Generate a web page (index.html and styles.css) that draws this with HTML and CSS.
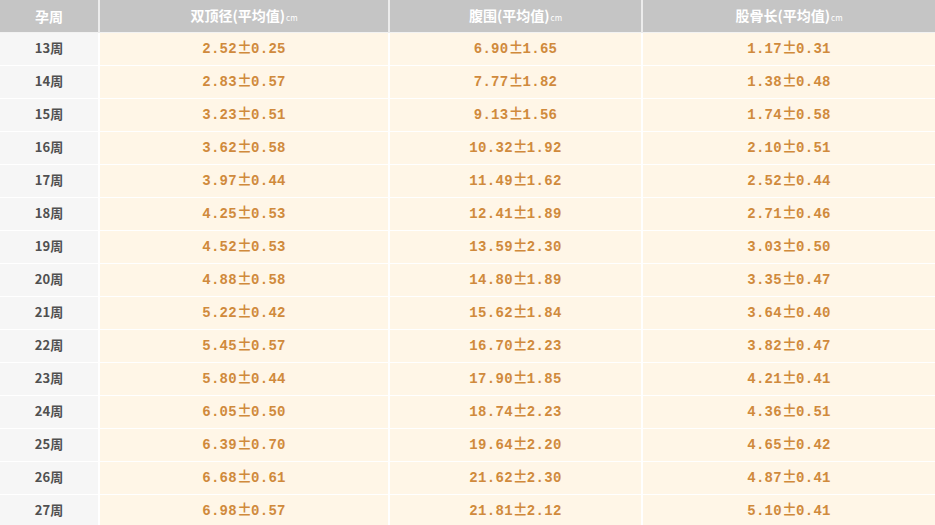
FILE: index.html
```html
<!DOCTYPE html>
<html lang="zh">
<head>
<meta charset="utf-8">
<link rel="stylesheet" href="styles.css">
</head>
<body>
<table class="grid">
  <colgroup>
    <col class="c-week"><col class="c-a"><col class="c-b"><col class="c-c">
  </colgroup>
  <thead>
    <tr>
      <th>孕周</th>
      <th>双顶径(平均值)<span class="unit">cm</span></th>
      <th>腹围(平均值)<span class="unit">cm</span></th>
      <th>股骨长(平均值)<span class="unit">cm</span></th>
    </tr>
  </thead>
  <tbody>
    <tr><td class="wk">13周</td><td>2.52<span class="pm">±</span>0.25</td><td>6.90<span class="pm">±</span>1.65</td><td>1.17<span class="pm">±</span>0.31</td></tr>
    <tr><td class="wk">14周</td><td>2.83<span class="pm">±</span>0.57</td><td>7.77<span class="pm">±</span>1.82</td><td>1.38<span class="pm">±</span>0.48</td></tr>
    <tr><td class="wk">15周</td><td>3.23<span class="pm">±</span>0.51</td><td>9.13<span class="pm">±</span>1.56</td><td>1.74<span class="pm">±</span>0.58</td></tr>
    <tr><td class="wk">16周</td><td>3.62<span class="pm">±</span>0.58</td><td>10.32<span class="pm">±</span>1.92</td><td>2.10<span class="pm">±</span>0.51</td></tr>
    <tr><td class="wk">17周</td><td>3.97<span class="pm">±</span>0.44</td><td>11.49<span class="pm">±</span>1.62</td><td>2.52<span class="pm">±</span>0.44</td></tr>
    <tr><td class="wk">18周</td><td>4.25<span class="pm">±</span>0.53</td><td>12.41<span class="pm">±</span>1.89</td><td>2.71<span class="pm">±</span>0.46</td></tr>
    <tr><td class="wk">19周</td><td>4.52<span class="pm">±</span>0.53</td><td>13.59<span class="pm">±</span>2.30</td><td>3.03<span class="pm">±</span>0.50</td></tr>
    <tr><td class="wk">20周</td><td>4.88<span class="pm">±</span>0.58</td><td>14.80<span class="pm">±</span>1.89</td><td>3.35<span class="pm">±</span>0.47</td></tr>
    <tr><td class="wk">21周</td><td>5.22<span class="pm">±</span>0.42</td><td>15.62<span class="pm">±</span>1.84</td><td>3.64<span class="pm">±</span>0.40</td></tr>
    <tr><td class="wk">22周</td><td>5.45<span class="pm">±</span>0.57</td><td>16.70<span class="pm">±</span>2.23</td><td>3.82<span class="pm">±</span>0.47</td></tr>
    <tr><td class="wk">23周</td><td>5.80<span class="pm">±</span>0.44</td><td>17.90<span class="pm">±</span>1.85</td><td>4.21<span class="pm">±</span>0.41</td></tr>
    <tr><td class="wk">24周</td><td>6.05<span class="pm">±</span>0.50</td><td>18.74<span class="pm">±</span>2.23</td><td>4.36<span class="pm">±</span>0.51</td></tr>
    <tr><td class="wk">25周</td><td>6.39<span class="pm">±</span>0.70</td><td>19.64<span class="pm">±</span>2.20</td><td>4.65<span class="pm">±</span>0.42</td></tr>
    <tr><td class="wk">26周</td><td>6.68<span class="pm">±</span>0.61</td><td>21.62<span class="pm">±</span>2.30</td><td>4.87<span class="pm">±</span>0.41</td></tr>
    <tr><td class="wk">27周</td><td>6.98<span class="pm">±</span>0.57</td><td>21.81<span class="pm">±</span>2.12</td><td>5.10<span class="pm">±</span>0.41</td></tr>
  </tbody>
</table>
</body>
</html>
```
FILE: styles.css
```css
html, body {
  margin: 0;
  padding: 0;
  background: #ffffff;
}

.grid {
  width: 935px;
  border-collapse: collapse;
  table-layout: fixed;
}

.c-week { width: 99px; }
.c-a { width: 290px; }
.c-b { width: 253px; }
.c-c { width: 293px; }

.grid th {
  height: 32px;
  padding: 0;
  background: #c5c5c5;
  color: #ffffff;
  font-family: "Noto Sans CJK SC", sans-serif;
  font-weight: 700;
  font-size: 14px;
  line-height: 16px;
  text-align: center;
  vertical-align: middle;
  border-right: 2px solid #ececec;
  border-bottom: 1px solid #f2f2f2;
}

.grid th:last-child { border-right: 0; }

.unit {
  font-size: 8px;
  font-weight: 400;
  margin-left: 1px;
}

.grid td {
  height: 30px;
  padding: 0 0 2px;
  background: #fff6e7;
  color: #d08a3c;
  font-family: "Liberation Mono", "Noto Sans CJK SC", monospace;
  font-weight: 700;
  font-size: 14px;
  line-height: 16px;
  letter-spacing: 0.3px;
  text-align: center;
  vertical-align: middle;
  border-right: 2px solid #ffffff;
  border-bottom: 1px solid #ffffff;
}

.grid td:last-child { border-right: 0; }

.pm {
  display: inline-block;
  width: 14px;
  line-height: 16px;
  text-align: center;
  font-family: "Noto Sans CJK SC", sans-serif;
  font-size: 15px;
  letter-spacing: 0;
}

.grid td.wk {
  background: #f6f6f6;
  color: #505050;
  font-family: "Noto Sans CJK SC", sans-serif;
  font-size: 13px;
  letter-spacing: 0;
}
```
